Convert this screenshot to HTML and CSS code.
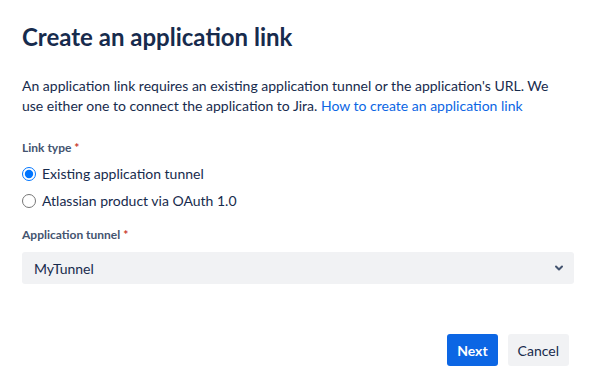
FILE: index.html
```html
<!DOCTYPE html>
<html>

<head>
    <title>Create an application link</title>
    <link rel="stylesheet" href="styles.css">
</head>

<body>
    <div class="modal">
        <h1 class="title">Create an application link</h1>
        <p class="intro">
            An application link requires an existing application tunnel or the application's URL. We<br>
            use either one to connect the application to Jira.
            <a href="#" class="link">How to create an application link</a>
        </p>

        <div class="field first">
            <div class="label">Link type <span class="req">*</span></div>
            <label class="radio">
                <input type="radio" name="type" checked>
                <span>Existing application tunnel</span>
            </label>
            <label class="radio">
                <input type="radio" name="type">
                <span>Atlassian product via OAuth 1.0</span>
            </label>
        </div>

        <div class="field">
            <div class="label spaced">Application tunnel <span class="req">*</span></div>
            <div class="select">
                <span>MyTunnel</span>
                <svg width="10" height="8" viewBox="0 0 10 8">
                    <path d="M2 2.5 L5 5.5 L8 2.5" fill="none" stroke="#44546F" stroke-width="2" stroke-linecap="round" stroke-linejoin="round"/>
                </svg>
            </div>
        </div>

        <div class="footer">
            <button class="btn primary">Next</button>
            <button class="btn subtle">Cancel</button>
        </div>
    </div>
</body>

</html>
```

FILE: styles.css
```css
* {
    box-sizing: border-box;
}

body {
    margin: 0;
    font-family: Lato, "Open Sans", sans-serif;
    color: #172B4D;
    background: #fff;
}

.modal {
    padding: 22px 22px 0 22px;
}

.title {
    margin: 0;
    font-size: 24px;
    line-height: 30px;
    font-weight: 700;
    color: #172B4D;
}

.intro {
    margin: 24px 0 0 0;
    font-size: 14px;
    line-height: 20px;
}

.link {
    color: #0C66E4;
    text-decoration: none;
}

.field {
    margin-top: 13px;
}

.field.first {
    margin-top: 24px;
}

.label {
    font-size: 12px;
    line-height: 16px;
    font-weight: 700;
    color: #44546F;
    margin-bottom: 4px;
}

.label.spaced {
    margin-bottom: 9px;
}

.req {
    color: #C9372C;
}

.radio {
    display: flex;
    align-items: center;
    height: 27px;
    font-size: 14px;
}

.radio input {
    margin: 0 6px 0 0;
    width: 14px;
    height: 14px;
}

.select {
    display: flex;
    align-items: center;
    justify-content: space-between;
    height: 32px;
    padding: 0 10px 0 12px;
    background: #F1F2F4;
    border-radius: 3px;
    font-size: 14px;
}

.footer {
    display: flex;
    justify-content: flex-end;
    gap: 10px;
    margin-top: 50px;
    padding-right: 5px;
}

.btn {
    height: 32px;
    border: none;
    border-radius: 3px;
    padding: 0 10px;
    font-family: inherit;
    font-size: 14px;
}

.primary {
    background: #0C66E4;
    color: #fff;
    font-weight: 700;
}

.subtle {
    background: #F1F2F4;
    color: #172B4D;
}
```
